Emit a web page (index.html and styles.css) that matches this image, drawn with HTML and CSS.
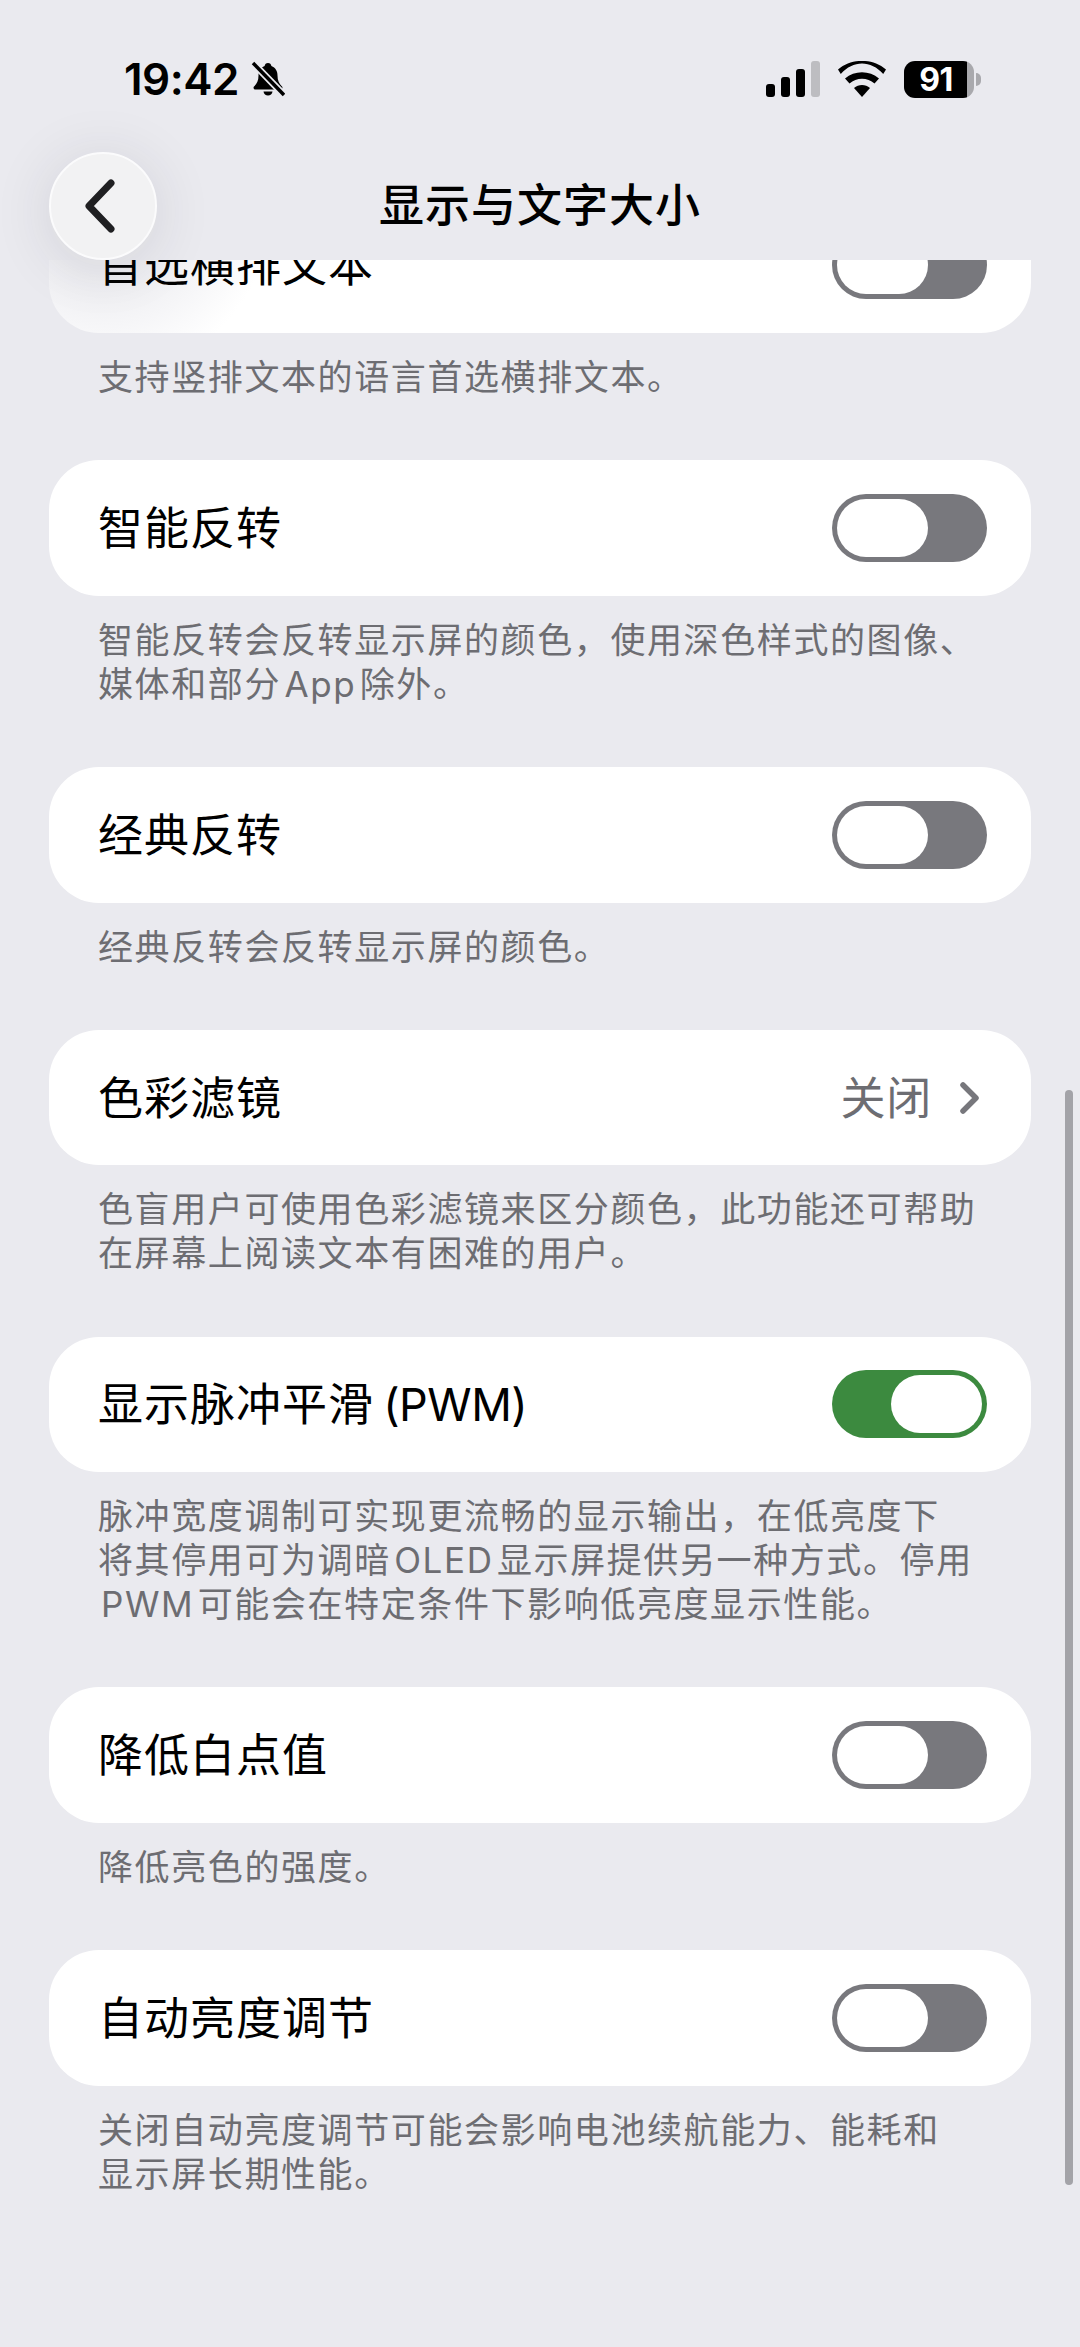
FILE: index.html
```html
<!DOCTYPE html>
<html lang="zh-CN">
  <head>
    <meta charset="UTF-8">
    <meta name="viewport" content="width=device-width, initial-scale=1.0">
    <title>显示与文字大小</title>
    <link rel="stylesheet" href="styles.css">
  </head>
  <body>
    <div class="screen">
      <header class="top">
        <!-- Status bar -->
        <div class="status">
          <div class="status-left">
            <span class="time">19:42</span>
            <svg class="bell" viewBox="0 0 34 36">
              <path d="M17 2c-2 0-3 1.300-3.400 3C9.500 6.500 7.500 10 7.500 14.500c0 5-1.500 8-4.500 11-1 1.200-.3 3 1.500 3h25c1.800 0 2.500-1.800 1.500-3-3-3-4.500-6-4.500-11C26.500 10 24.500 6.500 20.400 5 20 3.300 19 2 17 2z"/>
              <path d="M12.500 30.500h9c-.3 2.500-2.200 4-4.500 4s-4.200-1.500-4.500-4z"/>
              <path class="bell-gap" d="M1 1l32 33"/>
              <path class="bell-slash" d="M2 2l31 32"/>
            </svg>
          </div>
          <div class="status-right">
            <svg class="signal" viewBox="0 0 54 36">
              <rect x="0" y="23" width="9" height="13" rx="3"/>
              <rect x="15" y="16" width="9" height="20" rx="3"/>
              <rect x="30" y="8" width="9" height="28" rx="3"/>
              <rect class="signal-off" x="45" y="0" width="9" height="36" rx="3"/>
            </svg>
            <svg class="wifi" viewBox="0 0 48 36">
              <path d="M24 36l-8-9c4.500-4 11.500-4 16 0z"/>
              <path d="M11.500 22.500l-4.500-5c9.500-8.500 24.500-8.500 34 0l-4.500 5c-7-6.500-18-6.500-25 0z"/>
              <path d="M2.800 13L0 8.500C13.500-3 34.500-3 48 8.500L45.200 13C33-1 15-1 2.800 13z"/>
            </svg>
            <div class="battery">
              <div class="battery-body"><span class="battery-level">91</span></div>
              <div class="battery-cap"></div>
            </div>
          </div>
        </div>
        <!-- Nav bar -->
        <div class="nav">
          <button class="back">
            <svg viewBox="0 0 36 56"><path d="M29 5L7 28l22 23"/></svg>
          </button>
          <h1 class="title">显示与文字大小</h1>
        </div>
      </header>

      <main class="list">
        <section class="group group-cut">
          <div class="card">
            <div class="row">
              <span class="label">首选横排文本</span>
              <span class="switch"><span class="knob"></span></span>
            </div>
          </div>
          <p class="note">支持竖排文本的语言首选横排文本。</p>
        </section>

        <section class="group">
          <div class="card">
            <div class="row">
              <span class="label">智能反转</span>
              <span class="switch"><span class="knob"></span></span>
            </div>
          </div>
          <p class="note">智能反转会反转显示屏的颜色，使用深色样式的图像、<br>媒体和部分 App 除外。</p>
        </section>

        <section class="group">
          <div class="card">
            <div class="row">
              <span class="label">经典反转</span>
              <span class="switch"><span class="knob"></span></span>
            </div>
          </div>
          <p class="note">经典反转会反转显示屏的颜色。</p>
        </section>

        <section class="group">
          <div class="card">
            <div class="row">
              <span class="label">色彩滤镜</span>
              <span class="detail">
                <span class="detail-text">关闭</span>
                <svg class="chevron" viewBox="0 0 20 32"><path d="M3 3l13 13L3 29"/></svg>
              </span>
            </div>
          </div>
          <p class="note">色盲用户可使用色彩滤镜来区分颜色，此功能还可帮助<br>在屏幕上阅读文本有困难的用户。</p>
        </section>

        <section class="group">
          <div class="card">
            <div class="row">
              <span class="label">显示脉冲平滑 <span class="latin">(PWM)</span></span>
              <span class="switch switch-on"><span class="knob"></span></span>
            </div>
          </div>
          <p class="note">脉冲宽度调制可实现更流畅的显示输出，在低亮度下<br>将其停用可为调暗 OLED 显示屏提供另一种方式。停用<br><span class="indent">PWM 可能会在特定条件下影响低亮度显示性能。</span></p>
        </section>

        <section class="group">
          <div class="card">
            <div class="row">
              <span class="label">降低白点值</span>
              <span class="switch"><span class="knob"></span></span>
            </div>
          </div>
          <p class="note">降低亮色的强度。</p>
        </section>

        <section class="group">
          <div class="card">
            <div class="row">
              <span class="label">自动亮度调节</span>
              <span class="switch"><span class="knob"></span></span>
            </div>
          </div>
          <p class="note">关闭自动亮度调节可能会影响电池续航能力、能耗和<br>显示屏长期性能。</p>
        </section>
      </main>

      <div class="scrollbar"></div>
    </div>
  </body>
</html>
```

FILE: styles.css
```css
* {
  box-sizing: border-box;
}

html, body {
  margin: 0;
  padding: 0;
}

body {
  font-family: Inter, "Noto Sans CJK SC", "Noto Sans", sans-serif;
  background-color: #eaeaef;
  color: #000;
}

.screen {
  position: relative;
  width: 1080px;
  height: 2347px;
  overflow: hidden;
  background-color: #eaeaef;
}

/* Header */
.top {
  position: relative;
  z-index: 2;
  height: 260px;
  background-color: #eaeaef;
}

.status {
  display: flex;
  justify-content: space-between;
  align-items: center;
  height: 60px;
  padding: 49px 99px 0 124px;
  box-sizing: content-box;
}

.status-left {
  display: flex;
  align-items: center;
  gap: 12px;
}

.time {
  font-size: 44px;
  font-weight: 600;
  line-height: 60px;
  letter-spacing: -0.5px;
}

.bell {
  width: 34px;
  height: 36px;
  fill: #000;
}

.bell-gap {
  fill: none;
  stroke: #eaeaef;
  stroke-width: 7;
}

.bell-slash {
  fill: none;
  stroke: #000;
  stroke-width: 3.5;
}

.status-right {
  display: flex;
  align-items: center;
  gap: 18px;
}

.signal {
  width: 54px;
  height: 36px;
  fill: #000;
}

.signal-off {
  fill: #bdbdc1;
}

.wifi {
  width: 48px;
  height: 36px;
  fill: #000;
}

.battery {
  display: flex;
  align-items: center;
  gap: 2px;
}

.battery-body {
  width: 70px;
  height: 37px;
  border-radius: 11px;
  background: linear-gradient(to right, #000 90%, #a9a9ad 90%);
  color: #fff;
  display: flex;
  align-items: center;
  justify-content: center;
  padding-right: 6px;
}

.battery-level {
  font-size: 32px;
  font-weight: 700;
  line-height: 37px;
  letter-spacing: -0.5px;
}

.battery-cap {
  width: 5px;
  height: 13px;
  border-radius: 0 5px 5px 0;
  background-color: #a9a9ad;
}

.nav {
  position: absolute;
  left: 0;
  right: 0;
  top: 152px;
  height: 107px;
  display: flex;
  align-items: center;
  justify-content: center;
}

.back {
  position: absolute;
  left: 49px;
  top: 0;
  width: 108px;
  height: 108px;
  padding: 0;
  border: 2px solid #fbfbfc;
  border-radius: 50%;
  background-color: #f2f2f3;
  box-shadow: 0 6px 60px rgba(40, 40, 60, 0.12);
  display: flex;
  align-items: center;
  justify-content: center;
}

.back svg {
  width: 36px;
  height: 56px;
  margin-right: 7px;
  fill: none;
  stroke: #202022;
  stroke-width: 7;
  stroke-linecap: round;
  stroke-linejoin: round;
}

.title {
  margin: 0;
  font-size: 45px;
  font-weight: 500;
  letter-spacing: 1px;
  line-height: 60px;
}

/* Settings list */
.list {
  padding: 0 49px;
}

.card {
  height: 135.5px;
  border-radius: 50px;
  background-color: #fff;
  overflow: hidden;
}

.group-cut .card {
  height: 73px;
  border-radius: 0 0 50px 50px;
  background: radial-gradient(circle 170px at 54px -55px, #ececf0 40%, #fff 100%);
}

.group-cut .row {
  margin-top: -62.5px;
}

.row {
  height: 135.5px;
  display: flex;
  align-items: center;
  justify-content: space-between;
  padding: 0 44px 0 49px;
}

.label {
  padding-top: 2px;
  font-size: 45px;
  letter-spacing: 1px;
  word-spacing: -4.5px;
  line-height: 60px;
}

.latin {
  letter-spacing: -0.5px;
}

.switch {
  width: 155px;
  height: 68px;
  border-radius: 34px;
  padding: 5px;
  background-color: #78787d;
  display: flex;
}

.switch-on {
  background-color: #3c8a3f;
  justify-content: flex-end;
}

.knob {
  width: 91px;
  height: 58px;
  border-radius: 29px;
  background-color: #fff;
}

.detail {
  display: flex;
  align-items: center;
  gap: 28px;
  color: #6d6d72;
}

.detail-text {
  padding-top: 2px;
  font-size: 45px;
  letter-spacing: 0.7px;
  line-height: 60px;
}

.chevron {
  width: 20px;
  height: 32px;
  margin-right: 7px;
  fill: none;
  stroke: #77777c;
  stroke-width: 5.5;
  stroke-linecap: round;
  stroke-linejoin: round;
}

.note {
  margin: 0;
  padding: 22px 49px 61.3px;
  font-size: 35px;
  letter-spacing: 1.6px;
  word-spacing: -8px;
  line-height: 44px;
  color: #6d6d72;
}

.indent {
  margin-left: 3px;
}

.scrollbar {
  position: absolute;
  left: 1065px;
  top: 1090px;
  width: 8px;
  height: 1095px;
  border-radius: 4px;
  background-color: #a3a3a8;
}
```
